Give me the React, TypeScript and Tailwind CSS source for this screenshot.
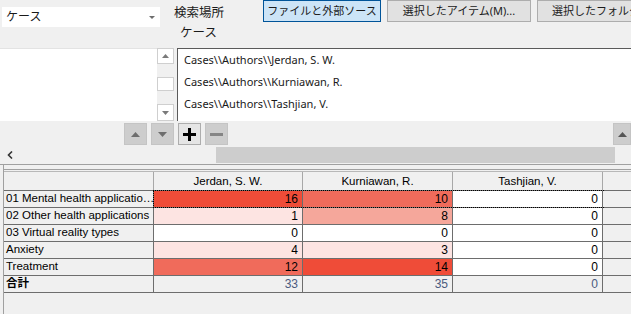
import React from "react";

const jp = "font-['Segoe_UI','Noto_Sans','Noto_Sans_CJK_JP',sans-serif]";
const grid = "font-['Liberation_Sans','Noto_Sans_CJK_JP',sans-serif]";

type Row = { label: string; values: number[]; colors: string[] };

const rows: Row[] = [
  {
    label: "01 Mental health applicatio…",
    values: [16, 10, 0],
    colors: ["bg-[#ef4c38]", "bg-[#f06b5b]", "bg-white"],
  },
  {
    label: "02 Other health applications",
    values: [1, 8, 0],
    colors: ["bg-[#fde4e2]", "bg-[#f5a79b]", "bg-white"],
  },
  {
    label: "03 Virtual reality types",
    values: [0, 0, 0],
    colors: ["bg-white", "bg-white", "bg-white"],
  },
  {
    label: "Anxiety",
    values: [4, 3, 0],
    colors: ["bg-[#fde4e2]", "bg-[#fde4e2]", "bg-white"],
  },
  {
    label: "Treatment",
    values: [12, 14, 0],
    colors: ["bg-[#f06b5b]", "bg-[#ef4c38]", "bg-white"],
  },
];

const widths = ["w-[150px]", "w-[149px]", "w-[150px]", "w-[150px]"];

function Tri({ dir, className }: { dir: "up" | "down"; className?: string }) {
  return (
    <svg width="9" height="5" viewBox="0 0 9 5" className={className}>
      {dir === "up" ? (
        <polygon points="0,5 9,5 4.5,0" fill="currentColor" />
      ) : (
        <polygon points="0,0 9,0 4.5,5" fill="currentColor" />
      )}
    </svg>
  );
}

function SmallTri({ dir }: { dir: "up" | "down" }) {
  return (
    <svg width="7" height="4" viewBox="0 0 7 4" className="text-[#7a7a7a]">
      {dir === "up" ? (
        <polygon points="0,4 7,4 3.5,0" fill="currentColor" />
      ) : (
        <polygon points="0,0 7,0 3.5,4" fill="currentColor" />
      )}
    </svg>
  );
}

export default function App() {
  return (
    <div className={`w-[631px] h-[314px] overflow-hidden bg-[#f0f0f0] text-[#1a1a1a] ${jp}`}>
      {/* top bar */}
      <div className="flex h-[48px]">
        <div className="ml-[2px] mt-[7px] flex h-[20px] w-[158px] shrink-0 items-center justify-between bg-white pl-[4px] pr-[5px] text-[12px]">
          <span>ケース</span>
          <svg width="6" height="3" viewBox="0 0 6 3">
            <polygon points="0,0 6,0 3,3" fill="#6d6d6d" />
          </svg>
        </div>
        <div className="ml-[14px] flex w-[89px] shrink-0 flex-col whitespace-nowrap pt-[3px] text-[12.5px] leading-[20px]">
          <span>検索場所</span>
          <span className="pl-[6px]">ケース</span>
        </div>
        <div className="flex h-[22px] shrink-0 gap-[6px] whitespace-nowrap text-[11px]">
          <div className="flex w-[118px] items-center justify-center border border-[#005499] bg-[#cce4f7]">
            ファイルと外部ソース
          </div>
          <div className="flex w-[144px] items-center justify-center border border-[#adadad] bg-[#e1e1e1]">
            選択したアイテム(M)...
          </div>
          <div className="flex w-[150px] items-center border border-[#adadad] bg-[#e1e1e1] pl-[14px]">
            選択したフォルダ(O)...
          </div>
        </div>
      </div>

      {/* lists */}
      <div className="flex h-[73px]">
        <div className="w-[157px] border-t border-[#e3e3e3] bg-white" />
        <div className="flex w-[17px] flex-col justify-between bg-[#f0f0f0]">
          <div className="flex h-[16px] items-center justify-center border border-[#cfcfcf] bg-white">
            <SmallTri dir="up" />
          </div>
          <div className="h-[14px] border border-[#cfcfcf] bg-white" />
          <div className="flex h-[17px] items-center justify-center border border-[#cfcfcf] bg-white">
            <SmallTri dir="down" />
          </div>
        </div>
        <div className="ml-[3px] flex flex-1 flex-col gap-[4px] border-l border-t border-[#5a5a5a] bg-white pl-[6px] pt-[2px] text-[11px] leading-[18px]">
          <span>Cases\\Authors\\Jerdan, S. W.</span>
          <span>Cases\\Authors\\Kurniawan, R.</span>
          <span>Cases\\Authors\\Tashjian, V.</span>
        </div>
      </div>

      {/* list toolbar */}
      <div className="flex h-[25px] items-start pt-[2px]">
        <div className="ml-[124px] flex gap-[4px]">
          <button className="flex h-[22px] w-[23px] items-center justify-center border border-[#c4c4c4] bg-[#cdcdcd] text-[#6e6e6e]">
            <Tri dir="up" />
          </button>
          <button className="flex h-[22px] w-[23px] items-center justify-center border border-[#c4c4c4] bg-[#cdcdcd] text-[#6e6e6e]">
            <Tri dir="down" />
          </button>
          <button className="flex h-[22px] w-[23px] items-center justify-center border border-[#adadad] bg-[#e5e5e5]">
            <svg width="13" height="13" viewBox="0 0 13 13">
              <rect x="5" y="0" width="3" height="13" fill="#000" />
              <rect x="0" y="5" width="13" height="3" fill="#000" />
            </svg>
          </button>
          <button className="flex h-[22px] w-[23px] items-center justify-center border border-[#c4c4c4] bg-[#cdcdcd]">
            <div className="h-[3px] w-[13px] bg-[#858585]" />
          </button>
        </div>
        <div className="ml-auto flex h-[22px] w-[18px] items-center justify-center border border-[#c4c4c4] bg-[#cdcdcd] text-[#555]">
          <Tri dir="up" />
        </div>
      </div>

      {/* horizontal scrollbar */}
      <div className="flex h-[18px] items-center">
        <svg width="6" height="8" viewBox="0 0 6 8" className="ml-[7px]">
          <polyline points="5,0.5 1.5,4 5,7.5" fill="none" stroke="#333" strokeWidth="1.6" />
        </svg>
        <div className="ml-[203px] h-[16px] w-[399px] bg-[#cdcdcd]" />
      </div>

      {/* grid panel */}
      <div className="h-[150px] border-t border-[#a0a0a0]">
        <div className="ml-[3px] h-full border-l border-[#a0a0a0] pt-[4px]">
          <div className="border-t border-[#a0a0a0] pt-[1px]">
            <div className={`${grid} text-[11.5px] text-black`}>
              {/* header */}
              <div className="flex h-[20px] border-t border-[#b8b8b8]">
                {["", "Jerdan, S. W.", "Kurniawan, R.", "Tashjian, V."].map((h, i) => (
                  <div
                    key={i}
                    className={`${widths[i]} flex items-center justify-center border-b border-r border-b-[#6d6d6d] border-r-[#a8a8a8] bg-[#f0f0f0] pt-[1px]`}
                  >
                    {h}
                  </div>
                ))}
                <div className="flex-1 border-b border-[#6d6d6d] bg-[#f0f0f0]" />
              </div>
              {/* body */}
              {rows.map((r, ri) => (
                <div key={ri} className="flex h-[17px]">
                  <div className="flex w-[150px] items-center overflow-hidden whitespace-nowrap border-b border-r border-[#6d6d6d] bg-[#f0f0f0] pl-[2px]">
                    {r.label}
                  </div>
                  <div className="relative flex">
                    {r.values.map((v, vi) => (
                      <div
                        key={vi}
                        className={`${widths[vi + 1]} ${r.colors[vi]} flex items-center justify-end border-b border-r border-[#6d6d6d] pr-[4px] text-[12px]`}
                      >
                        {v}
                      </div>
                    ))}
                    {ri === 0 && (
                      <div className="pointer-events-none absolute inset-x-[-1px] top-[-1px] bottom-0 border-y border-l border-dotted border-black" />
                    )}
                  </div>
                  <div className="flex-1 border-b border-[#6d6d6d] bg-[#f0f0f0]" />
                </div>
              ))}
              {/* total */}
              <div className="flex h-[17px]">
                <div className="flex w-[150px] items-center border-b border-r border-[#6d6d6d] bg-[#f0f0f0] pl-[2px] font-bold">
                  合計
                </div>
                {[33, 35, 0].map((v, vi) => (
                  <div
                    key={vi}
                    className={`${widths[vi + 1]} flex items-center justify-end border-b border-r border-[#6d6d6d] bg-[#f0f0f0] pr-[4px] text-[12px] text-[#4a5a7e]`}
                  >
                    {v}
                  </div>
                ))}
                <div className="flex-1 border-b border-[#6d6d6d] bg-[#f0f0f0]" />
              </div>
            </div>
          </div>
        </div>
      </div>
    </div>
  );
}
